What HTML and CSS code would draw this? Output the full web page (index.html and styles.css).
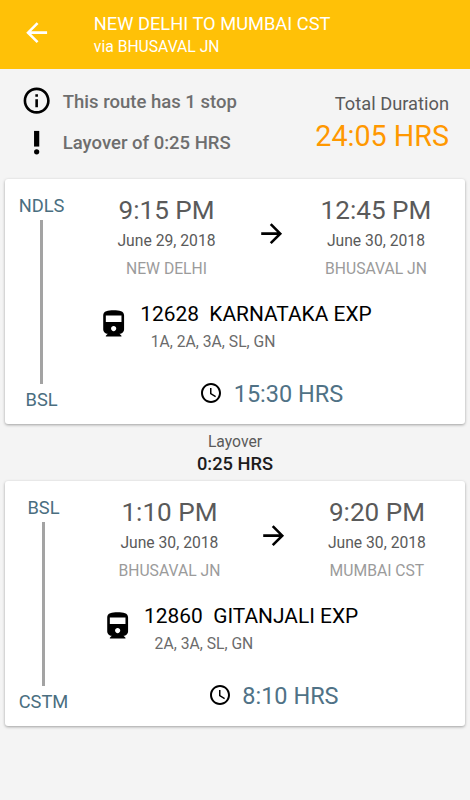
FILE: index.html
```html
<!DOCTYPE html>
<html lang="en">
<head>
    <meta charset="UTF-8">
    <meta name="viewport" content="width=device-width, initial-scale=1.0">
    <title>Route Details</title>
    <link rel="stylesheet" href="styles.css">
</head>
<body>
    <div class="Header">
        <svg class="Icon" viewBox="0 0 24 24"><path d="M20 11H7.83l5.59-5.59L12 4l-8 8 8 8 1.41-1.41L7.83 13H20v-2z"/></svg>
        <div class="Header-Text">
            <div class="Header-Title">NEW DELHI TO MUMBAI CST</div>
            <div class="Header-Via">via BHUSAVAL JN</div>
        </div>
    </div>
    <div class="Summary">
        <div class="Summary-Notes">
            <div class="Note">
                <svg class="Icon" viewBox="0 0 24 24"><path d="M11 17h2v-6h-2v6zm1-15C6.48 2 2 6.48 2 12s4.48 10 10 10 10-4.48 10-10S17.52 2 12 2zm0 18c-4.41 0-8-3.59-8-8s3.59-8 8-8 8 3.59 8 8-3.59 8-8 8zM11 9h2V7h-2v2z"/></svg>
                <span>This route has 1 stop</span>
            </div>
            <div class="Note">
                <svg class="Icon" viewBox="0 0 24 24"><circle cx="12" cy="19" r="2"/><path d="M10 3h4v12h-4z"/></svg>
                <span>Layover of 0:25 HRS</span>
            </div>
        </div>
        <div class="Total">
            <div class="Total-Label">Total Duration</div>
            <div class="Total-Value">24:05 HRS</div>
        </div>
    </div>

    <div class="Card">
        <div class="Rail">
            <span>NDLS</span>
            <div class="Rail-Line"></div>
            <span>BSL</span>
        </div>
        <div class="Card-Main">
            <div class="Times">
                <div class="Stop">
                    <div class="Stop-Time">9:15 PM</div>
                    <div class="Stop-Date">June 29, 2018</div>
                    <div class="Stop-Station">NEW DELHI</div>
                </div>
                <svg class="Icon Arrow" viewBox="0 0 24 24"><path d="M12 4l-1.41 1.41L16.17 11H4v2h12.17l-5.58 5.59L12 20l8-8z"/></svg>
                <div class="Stop">
                    <div class="Stop-Time">12:45 PM</div>
                    <div class="Stop-Date">June 30, 2018</div>
                    <div class="Stop-Station">BHUSAVAL JN</div>
                </div>
            </div>
            <div class="Train">
                <svg class="Icon Train-Icon" viewBox="0 0 24 24"><path d="M4 15.5C4 17.43 5.57 19 7.5 19L6 20.5v.5h12v-.5L16.5 19c1.93 0 3.5-1.57 3.5-3.5V5c0-3.5-3.58-4-8-4s-8 .5-8 4v10.5zm8 1.5c-1.1 0-2-.9-2-2s.9-2 2-2 2 .9 2 2-.9 2-2 2zm6-7H6V5h12v5z"/></svg>
                <div class="Train-Info">
                    <div class="Train-Name">12628&nbsp; KARNATAKA EXP</div>
                    <div class="Train-Classes">1A, 2A, 3A, SL, GN</div>
                </div>
            </div>
            <div class="Duration">
                <svg class="Clock" viewBox="0 0 24 24"><path d="M11.99 2C6.47 2 2 6.48 2 12s4.47 10 9.99 10C17.52 22 22 17.52 22 12S17.52 2 11.99 2zM12 20c-4.42 0-8-3.58-8-8s3.58-8 8-8 8 3.58 8 8-3.58 8-8 8zm.5-13H11v6l5.25 3.15.75-1.23-4.5-2.67z"/></svg>
                <span>15:30 HRS</span>
            </div>
        </div>
    </div>

    <div class="Layover">
        <div class="Layover-Label">Layover</div>
        <div class="Layover-Value">0:25 HRS</div>
    </div>

    <div class="Card">
        <div class="Rail">
            <span>BSL</span>
            <div class="Rail-Line"></div>
            <span>CSTM</span>
        </div>
        <div class="Card-Main">
            <div class="Times">
                <div class="Stop">
                    <div class="Stop-Time">1:10 PM</div>
                    <div class="Stop-Date">June 30, 2018</div>
                    <div class="Stop-Station">BHUSAVAL JN</div>
                </div>
                <svg class="Icon Arrow" viewBox="0 0 24 24"><path d="M12 4l-1.41 1.41L16.17 11H4v2h12.17l-5.58 5.59L12 20l8-8z"/></svg>
                <div class="Stop">
                    <div class="Stop-Time">9:20 PM</div>
                    <div class="Stop-Date">June 30, 2018</div>
                    <div class="Stop-Station">MUMBAI CST</div>
                </div>
            </div>
            <div class="Train">
                <svg class="Icon Train-Icon" viewBox="0 0 24 24"><path d="M4 15.5C4 17.43 5.57 19 7.5 19L6 20.5v.5h12v-.5L16.5 19c1.93 0 3.5-1.57 3.5-3.5V5c0-3.5-3.58-4-8-4s-8 .5-8 4v10.5zm8 1.5c-1.1 0-2-.9-2-2s.9-2 2-2 2 .9 2 2-.9 2-2 2zm6-7H6V5h12v5z"/></svg>
                <div class="Train-Info">
                    <div class="Train-Name">12860&nbsp; GITANJALI EXP</div>
                    <div class="Train-Classes">2A, 3A, SL, GN</div>
                </div>
            </div>
            <div class="Duration">
                <svg class="Clock" viewBox="0 0 24 24"><path d="M11.99 2C6.47 2 2 6.48 2 12s4.47 10 9.99 10C17.52 22 22 17.52 22 12S17.52 2 11.99 2zM12 20c-4.42 0-8-3.58-8-8s3.58-8 8-8 8 3.58 8 8-3.58 8-8 8zm.5-13H11v6l5.25 3.15.75-1.23-4.5-2.67z"/></svg>
                <span>8:10 HRS</span>
            </div>
        </div>
    </div>
</body>
</html>
```
FILE: styles.css
```css
body {
    margin: 0;
    min-height: 100vh;
    font-family: Roboto, sans-serif;
    background-color: #f4f4f4;
    color: #5a5a5a;
}

.Icon {
    width: 31.3px;
    height: 31.3px;
    flex-shrink: 0;
}

.Header {
    height: 69px;
    box-sizing: border-box;
    padding: 13px 21px 0;
    display: flex;
    background-color: #ffc107;
    color: #ffffff;
}

.Header .Icon {
    margin-top: 4px;
    fill: #ffffff;
}

.Header-Text {
    margin-left: 41.5px;
}

.Header-Title {
    font-size: 18.3px;
    line-height: 22px;
}

.Header-Via {
    font-size: 15.7px;
    line-height: 20px;
    margin-top: 2px;
}

.Summary {
    height: 110px;
    box-sizing: border-box;
    padding: 16px 21px 0;
    display: flex;
    justify-content: space-between;
}

.Note {
    display: flex;
    align-items: center;
    height: 32px;
    margin-bottom: 9.5px;
    font-size: 18.5px;
    font-weight: 500;
    color: #6e6e6e;
}

.Note span {
    margin-left: 10.5px;
    padding-top: 1px;
}

.Total {
    text-align: right;
    padding-top: 8px;
}

.Total-Label {
    font-size: 18.3px;
    line-height: 22px;
}

.Total-Value {
    font-size: 28.7px;
    line-height: 34px;
    margin-top: 4px;
    color: #ff9800;
}

.Card {
    display: flex;
    height: 245px;
    margin: 0 5px;
    background-color: #ffffff;
    border-radius: 3px;
    box-shadow: 0 1px 3px rgba(0, 0, 0, 0.35);
}

.Rail {
    display: flex;
    flex-direction: column;
    align-items: center;
    padding: 16px 13px 0 13.7px;
    font-size: 18.3px;
    line-height: 22px;
    color: #4a6e80;
}

.Rail-Line {
    width: 3px;
    height: 164px;
    margin: 3px 0 5px;
    background-color: #a3a3a3;
}

.Card-Main {
    flex: 1;
    padding-top: 16px;
}

.Times {
    display: flex;
}

.Stop {
    flex: 1;
    text-align: center;
}

.Stop-Time {
    font-size: 26.1px;
    line-height: 31px;
}

.Stop-Date {
    font-size: 15.7px;
    line-height: 20px;
    margin-top: 5px;
}

.Stop-Station {
    font-size: 15.7px;
    line-height: 20px;
    margin-top: 8px;
    color: #9b9b9b;
}

.Arrow {
    margin-top: 23px;
}

.Train {
    display: flex;
    margin: 23px 0 0 21px;
}

.Train-Icon {
    margin-top: 7px;
}

.Train-Info {
    margin-left: 10.5px;
}

.Train-Name {
    font-size: 20.9px;
    line-height: 25px;
    color: #000000;
}

.Train-Classes {
    font-size: 15.7px;
    line-height: 20px;
    margin: 5px 0 0 10.5px;
    color: #6b6b6b;
}

.Duration {
    display: flex;
    justify-content: center;
    align-items: center;
    margin-top: 28px;
    font-size: 23.5px;
    line-height: 28px;
    color: #507286;
}

.Clock {
    width: 24px;
    height: 24px;
    margin: 0 10.5px 2px 0;
}

.Layover {
    height: 57px;
    box-sizing: border-box;
    padding-top: 8px;
    text-align: center;
}

.Layover-Label {
    font-size: 15.7px;
    line-height: 20px;
}

.Layover-Value {
    font-size: 18.3px;
    line-height: 22px;
    margin-top: 1px;
    font-weight: 500;
    color: #1c1c1c;
}
```
